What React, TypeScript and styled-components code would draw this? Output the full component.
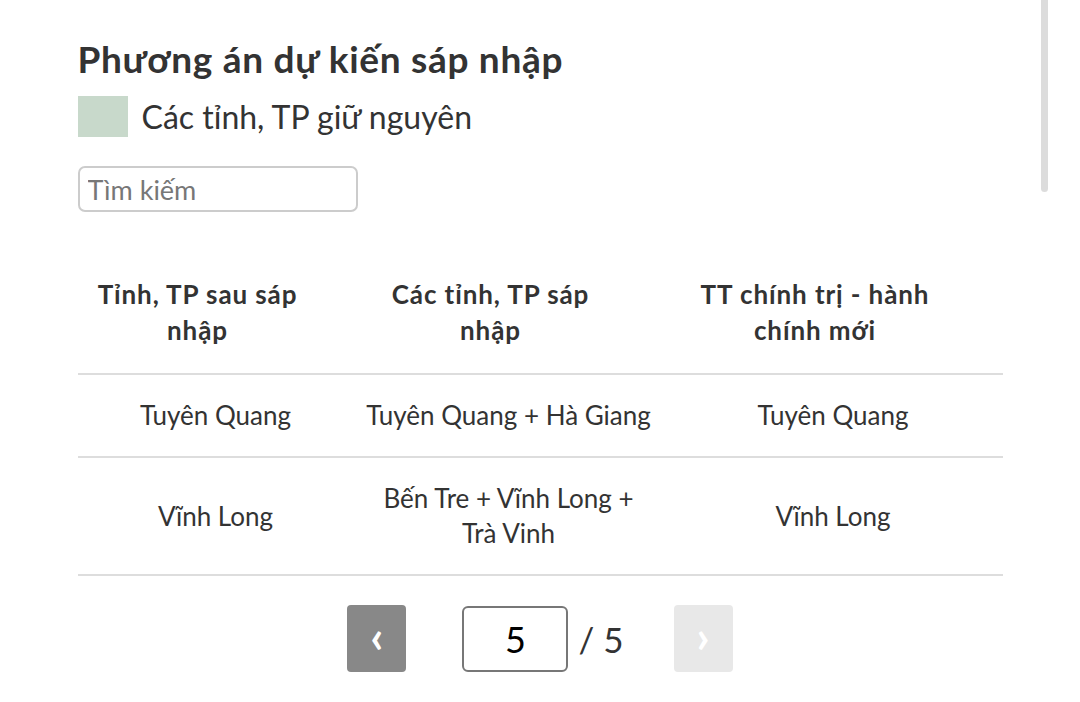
import React from "react";
import styled, { createGlobalStyle } from "styled-components";

const Global = createGlobalStyle`
  html, body { margin: 0; padding: 0; background: #fff; overflow: hidden; }
  body { font-family: Lato, "Noto Sans", sans-serif; color: #333; }
  * { box-sizing: border-box; }
`;

const Page = styled.div`
  width: 925px;
  margin: 0 auto;
  padding-top: 36px;
`;

const Title = styled.h2`
  margin: 0;
  font-size: 37px;
  line-height: 46px;
  letter-spacing: 0.7px;
  font-weight: 700;
  color: #333;
`;

const Legend = styled.div`
  display: flex;
  align-items: center;
  gap: 14px;
  margin-top: 14px;
`;

const Swatch = styled.span<{ $color: string }>`
  width: 50px;
  height: 41px;
  background: ${(p) => p.$color};
`;

const LegendText = styled.span`
  font-size: 32px;
  line-height: 41px;
  color: #333;
`;

const Search = styled.input`
  display: block;
  margin-top: 29px;
  width: 280px;
  height: 46px;
  border: 2px solid #ccc;
  border-radius: 7px;
  padding: 0 8px;
  font-family: inherit;
  font-size: 27px;
  color: #333;
  outline: none;
  &::placeholder { color: #777; }
`;

const Table = styled.table`
  width: 925px;
  margin-top: 50px;
  border-collapse: collapse;
  table-layout: fixed;
`;

const Th = styled.th`
  padding: 14px 48px 25px 12px;
  font-size: 26px;
  line-height: 36px;
  letter-spacing: 0.9px;
  font-weight: 700;
  text-align: center;
  color: #333;
  border-bottom: 2px solid #ddd;
`;

const Td = styled.td`
  padding: 23px 12px;
  font-size: 26px;
  line-height: 35px;
  text-align: center;
  color: #333;
  border-bottom: 2px solid #ddd;
`;

const Pager = styled.div`
  display: flex;
  justify-content: center;
  align-items: center;
  margin-top: 29px;
`;

const NavButton = styled.button<{ $disabled?: boolean }>`
  width: 59px;
  height: 67px;
  border: none;
  border-radius: 4px;
  background: ${(p) => (p.$disabled ? "#e8e8e8" : "#888")};
  color: #fff;
  font-family: inherit;
  font-size: 46px;
  font-weight: 700;
  line-height: 1;
  padding: 0 0 6px;
  cursor: pointer;
`;

const PageInput = styled.input`
  width: 106px;
  height: 66px;
  margin-left: 56px;
  border: 2px solid #777;
  border-radius: 6px;
  text-align: center;
  font-family: inherit;
  font-size: 36px;
  color: #000;
  outline: none;
`;

const Total = styled.span`
  margin: 0 50px 0 10px;
  font-size: 35px;
  color: #333;
`;

const ScrollThumb = styled.div`
  position: fixed;
  top: 0;
  right: 32px;
  width: 7px;
  height: 192px;
  border-radius: 0 0 4px 4px;
  background: #dcdcdc;
`;

const rows = [
  ["Tuyên Quang", "Tuyên Quang + Hà Giang", "Tuyên Quang"],
  ["Vĩnh Long", "Bến Tre + Vĩnh Long + Trà Vinh", "Vĩnh Long"],
];

export default function App() {
  return (
    <>
      <Global />
      <Page>
        <Title>Phương án dự kiến sáp nhập</Title>
        <Legend>
          <Swatch $color="#c8d9cb" />
          <LegendText>Các tỉnh, TP giữ nguyên</LegendText>
        </Legend>
        <Search placeholder="Tìm kiếm" />
        <Table>
          <colgroup>
            <col style={{ width: 276 }} />
            <col style={{ width: 310 }} />
            <col style={{ width: 339 }} />
          </colgroup>
          <thead>
            <tr>
              <Th>Tỉnh, TP sau sáp nhập</Th>
              <Th>Các tỉnh, TP sáp nhập</Th>
              <Th>TT chính trị - hành chính mới</Th>
            </tr>
          </thead>
          <tbody>
            {rows.map((r, i) => (
              <tr key={i}>
                {r.map((c, j) => (
                  <Td key={j}>{c}</Td>
                ))}
              </tr>
            ))}
          </tbody>
        </Table>
        <Pager>
          <NavButton>‹</NavButton>
          <PageInput defaultValue="5" />
          <Total>/ 5</Total>
          <NavButton $disabled>›</NavButton>
        </Pager>
      </Page>
      <ScrollThumb />
    </>
  );
}
